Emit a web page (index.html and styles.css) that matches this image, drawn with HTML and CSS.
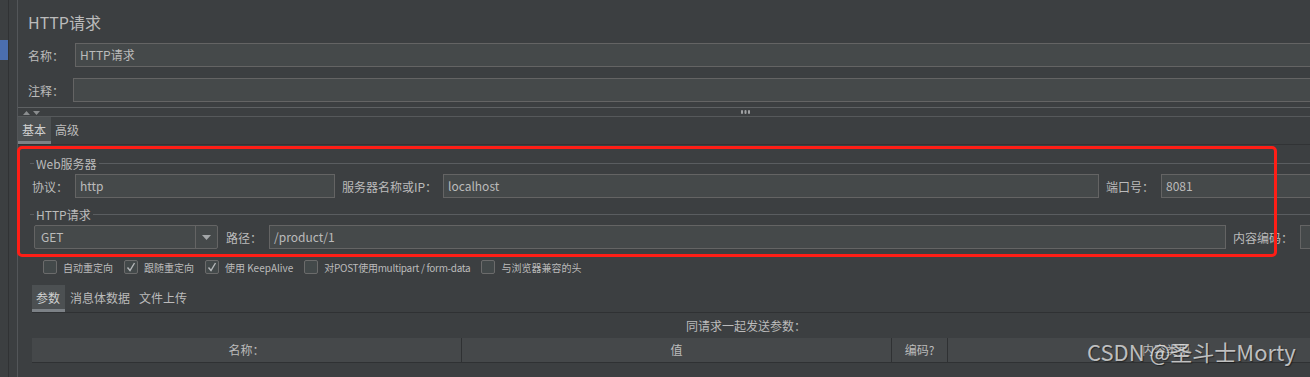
FILE: index.html
```html
<!DOCTYPE html>
<html>
<head>
    <title>HTTP请求</title>
    <link rel="stylesheet" href="styles.css">
</head>
<body>
<div class="app">
    <div class="rail"><div class="rail-sel"></div></div>
    <div class="gutter"></div>
    <div class="main">
        <div class="head">
            <h1 class="title">HTTP请求</h1>
            <div class="row row-name">
                <span class="label">名称：</span>
                <div class="input">HTTP请求</div>
            </div>
            <div class="row row-note">
                <span class="label">注释：</span>
                <div class="input"></div>
            </div>
        </div>

        <div class="splitter">
            <svg class="arrows" width="20" height="6" viewBox="0 0 20 6">
                <polygon points="1,5 4.5,1 8,5" fill="#8a8d8f"/>
                <polygon points="11,1 18,1 14.5,5" fill="#8a8d8f"/>
            </svg>
            <svg class="grip" width="9" height="4" viewBox="0 0 9 4">
                <rect x="0" y="0" width="2" height="4" rx="1" fill="#a0a2a4"/>
                <rect x="3.5" y="0" width="2" height="4" rx="1" fill="#a0a2a4"/>
                <rect x="7" y="0" width="2" height="4" rx="1" fill="#a0a2a4"/>
            </svg>
        </div>

        <div class="tabs tabs-top">
            <span class="tab active">基本</span>
            <span class="tab">高级</span>
        </div>

        <div class="group-title"><span>Web服务器</span></div>
        <div class="row row-server">
            <span class="label lb-proto">协议：</span>
            <div class="input in-proto">http</div>
            <span class="label lb-host">服务器名称或IP：</span>
            <div class="input in-host">localhost</div>
            <span class="label lb-port">端口号：</span>
            <div class="input in-port">8081</div>
        </div>

        <div class="group-title"><span>HTTP请求</span></div>
        <div class="row row-request">
            <div class="combo">
                <span class="combo-value">GET</span>
                <span class="combo-btn">
                    <svg width="9" height="5" viewBox="0 0 9 5"><polygon points="0,0 9,0 4.5,5" fill="#a3a6a8"/></svg>
                </span>
            </div>
            <span class="label lb-path">路径：</span>
            <div class="input in-path">/product/1</div>
            <span class="label lb-enc">内容编码：</span>
            <div class="input in-enc"></div>
        </div>

        <div class="checks">
            <label class="check"><span class="box"></span>自动重定向</label>
            <label class="check"><span class="box"><svg width="12" height="12" viewBox="0 0 12 12"><polyline points="2.5,6.5 5,9.5 9.5,2" fill="none" stroke="#b4b7b9" stroke-width="1.4"/></svg></span>跟随重定向</label>
            <label class="check"><span class="box"><svg width="12" height="12" viewBox="0 0 12 12"><polyline points="2.5,6.5 5,9.5 9.5,2" fill="none" stroke="#b4b7b9" stroke-width="1.4"/></svg></span>使用 KeepAlive</label>
            <label class="check"><span class="box"></span><span class="narrow">对POST使用multipart / form-data</span></label>
            <label class="check"><span class="box"></span>与浏览器兼容的头</label>
        </div>

        <div class="tabs tabs-params">
            <span class="tab active">参数</span>
            <span class="tab">消息体数据</span>
            <span class="tab">文件上传</span>
        </div>

        <div class="caption">同请求一起发送参数：</div>
        <div class="table-head">
            <div class="col col-name">名称：</div>
            <div class="col col-value">值</div>
            <div class="col col-enc">编码?</div>
            <div class="col col-type">内容类型</div>
        </div>
    </div>

    <div class="mark-box"></div>
    <div class="watermark">CSDN @圣斗士Morty</div>
</div>
</body>
</html>
```

FILE: styles.css
```css
body {
    margin: 0;
    width: 1310px;
    height: 377px;
    overflow: hidden;
    background: #3c3f41;
    color: #bbbbbb;
    font-family: "Noto Sans CJK SC", "Noto Sans", sans-serif;
    font-size: 12px;
}
.app {
    position: relative;
    display: flex;
    height: 377px;
}
.rail {
    flex: none;
    width: 8px;
    padding-top: 40px;
    border-right: 1px solid #303234;
}
.rail-sel {
    height: 20px;
    background: #4b6eaf;
}
.gutter {
    flex: none;
    width: 8px;
    border-right: 1px solid #535659;
}
.main {
    flex: none;
    width: 1420px;
}

/* top: title / name / comment */
.head {
    padding: 11px 0 0 10px;
}
.title {
    margin: 0;
    height: 22px;
    font-size: 16px;
    font-weight: normal;
    line-height: 22px;
}
.row {
    display: flex;
    align-items: center;
    height: 24px;
}
.label {
    flex: none;
    white-space: nowrap;
}
.input {
    box-sizing: border-box;
    height: 24px;
    padding-left: 4px;
    line-height: 22px;
    background: #45494a;
    border: 1px solid #646464;
    color: #bbbbbb;
}
.row-name {
    margin-top: 10px;
}
.row-name .label { width: 47px; }
.row-note {
    margin-top: 11px;
}
.row-note .label { width: 45px; }
.row-name .input,
.row-note .input {
    flex: 1;
}

/* splitter */
.splitter {
    box-sizing: border-box;
    position: relative;
    height: 10px;
    margin-top: 5px;
    border-top: 1px solid #5e6163;
    border-bottom: 1px solid #56595b;
}
.arrows {
    position: absolute;
    left: 4px;
    top: 2px;
}
.grip {
    position: absolute;
    left: 723px;
    top: 2px;
}

/* tabs */
.tabs {
    display: flex;
    height: 27px;
    border-bottom: 1px solid #313335;
}
.tab {
    box-sizing: border-box;
    height: 27px;
    padding: 0 5px 0 4px;
    line-height: 26px;
    font-size: 12px;
}
.tab.active {
    background: #4c5052;
    border-bottom: 3px solid #7c8186;
    color: #d0d0d0;
}

/* grouped fields */
.group-title {
    display: flex;
    align-items: center;
    height: 16px;
    margin: 10px 0 0 12px;
}
.group-title::before {
    content: "";
    width: 4px;
    border-top: 1px solid #5a5d60;
}
.group-title::after {
    content: "";
    flex: 1;
    border-top: 1px solid #5a5d60;
}
.group-title span {
    padding: 0 2px;
}
.row-server {
    margin-top: 3px;
    padding-left: 14px;
}
.lb-proto { width: 43px; }
.in-proto { width: 260px; }
.lb-host { width: 101px; margin-left: 7px; }
.in-host { width: 656px; }
.lb-port { width: 55px; margin-left: 7px; }
.in-port { flex: 1; }

.row-server + .group-title {
    margin-top: 8px;
}
.row-request {
    margin-top: 3px;
    padding-left: 16px;
}
.combo {
    box-sizing: border-box;
    display: flex;
    width: 184px;
    height: 24px;
    background: #45494a;
    border: 1px solid #646464;
    border-radius: 2px;
}
.combo-value {
    flex: 1;
    padding-left: 6px;
    line-height: 22px;
}
.combo-btn {
    display: flex;
    align-items: center;
    justify-content: center;
    width: 21px;
    border-left: 1px solid #646464;
}
.lb-path { width: 43px; margin-left: 8px; }
.in-path { width: 957px; }
.lb-enc { width: 67px; margin-left: 7px; }
.in-enc { flex: 1; }

/* checkboxes */
.checks {
    display: flex;
    align-items: center;
    height: 14px;
    margin-top: 11px;
    padding-left: 25px;
    font-size: 10px;
}
.check {
    display: flex;
    align-items: center;
    margin-right: 11px;
    white-space: nowrap;
}
.narrow {
    letter-spacing: -0.3px;
}
.box {
    box-sizing: border-box;
    display: flex;
    align-items: center;
    justify-content: center;
    width: 14px;
    height: 14px;
    margin-right: 6px;
    background: #43494a;
    border: 1px solid #6b6b6b;
    border-radius: 2px;
}

/* parameters */
.tabs-params {
    margin: 11px 0 0 14px;
    border-bottom-color: #2f3133;
}
.tabs-params .tab {
    padding: 0 4px 0 5px;
}
.tabs-params .tab.active {
    padding: 0 5px 0 4px;
}
.caption {
    height: 25px;
    padding-left: 668px;
    line-height: 25px;
}
.table-head {
    box-sizing: border-box;
    display: flex;
    height: 25px;
    margin-left: 14px;
    background: #45484a;
    border-bottom: 1px solid #2f3133;
}
.col {
    box-sizing: border-box;
    line-height: 24px;
    text-align: center;
    border-right: 1px solid #2f3133;
}
.col-name { width: 430px; }
.col-value { width: 430px; }
.col-enc { width: 56px; }
.col-type { width: 436px; border-right: none; }

/* screenshot annotations */
.mark-box {
    position: absolute;
    left: 17px;
    top: 146px;
    width: 1260px;
    height: 111px;
    box-sizing: border-box;
    border: 3px solid #fe1e16;
    border-radius: 5px;
}
.watermark {
    position: absolute;
    left: 1087px;
    top: 336px;
    font-size: 22px;
    line-height: 30px;
    color: rgba(230, 230, 230, 0.78);
    text-shadow: 1px 1px 1px rgba(0, 0, 0, 0.45);
}
```
